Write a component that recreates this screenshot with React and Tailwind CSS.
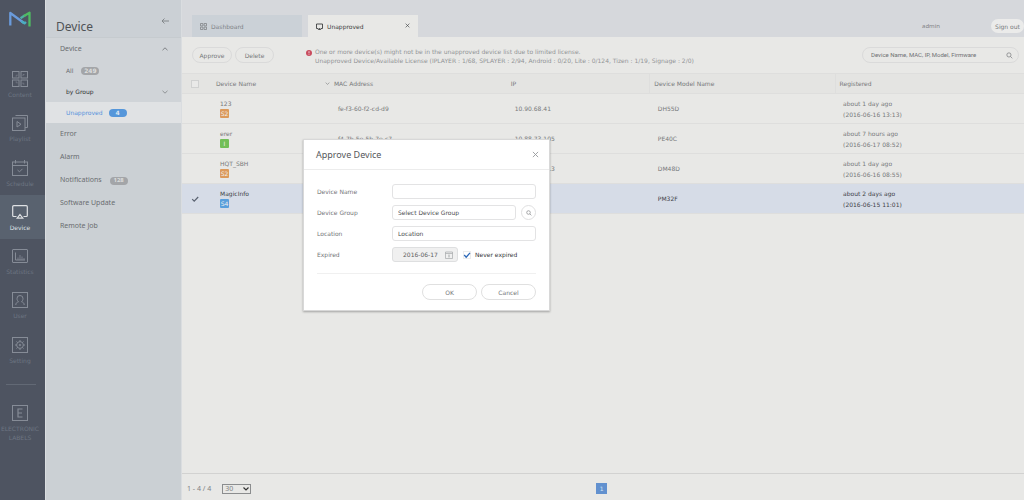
import React, { useState } from "react";

const stroke = { fill: "none", stroke: "currentColor", strokeWidth: 1 };

function ContentIcon() {
  return (
    <svg viewBox="0 0 16 16" className="size-4" {...stroke}>
      <rect x="0.5" y="0.5" width="6.5" height="6.5" />
      <rect x="9" y="0.5" width="6.5" height="6.5" />
      <rect x="0.5" y="9" width="6.5" height="6.5" />
      <rect x="9" y="9" width="6.5" height="6.5" />
      <path d="M3.500 5h1.500V3.500M11 5V3.500h1.500M3.500 11h1.500v1.500M12.500 13H11v-1.500" strokeWidth="0.6" />
    </svg>
  );
}

function PlaylistIcon() {
  return (
    <svg viewBox="0 0 16 16" className="size-4" {...stroke}>
      <path d="M3.500 0.500h12v12h-2.500" />
      <rect x="0.5" y="3" width="12.5" height="12.5" />
      <path d="M5 6.500v5.500l4-2.750z" />
    </svg>
  );
}

function ScheduleIcon() {
  return (
    <svg viewBox="0 0 16 16" className="size-4" {...stroke}>
      <rect x="0.5" y="2" width="15" height="13.500" />
      <path d="M0.500 5.500h15M3.500 0v3.500M12.500 0v3.500M5.500 10l2 1.800 3-3" />
    </svg>
  );
}

function DeviceIcon() {
  return (
    <svg viewBox="0 0 16 16" className="size-4" {...stroke} strokeWidth="1.200">
      <path d="M4.500 12.500H1.700a1 1 0 0 1-1-1V2.700a1 1 0 0 1 1-1h12.600a1 1 0 0 1 1 1V11.500a1 1 0 0 1-1 1h-2.800" />
      <path d="M8 10.500l2.800 3.700H5.200z" />
    </svg>
  );
}

function StatisticsIcon() {
  return (
    <svg viewBox="0 0 16 16" className="size-4" {...stroke}>
      <rect x="0.5" y="1.500" width="15" height="13" rx="0.500" />
      <path d="M3.500 4.500V12h9.500" />
      <path d="M6 12V9.500M8 12V7M10 12V8.500M12 12v-2" strokeWidth="0.800" />
    </svg>
  );
}

function UserIcon() {
  return (
    <svg viewBox="0 0 16 16" className="size-4" {...stroke}>
      <rect x="0.5" y="0.5" width="15" height="15" />
      <path d="M3.800 13c0-2 1-2.700 2.700-3.200-.8-.8-1.500-1.800-1.500-3.100A3 3 0 0 1 8 3.500a3 3 0 0 1 3 3.200c0 1.300-.7 2.300-1.500 3.100 1.700.5 2.700 1.200 2.700 3.200" />
    </svg>
  );
}

function SettingIcon() {
  return (
    <svg viewBox="0 0 16 16" className="size-4" {...stroke}>
      <rect x="0.5" y="0.5" width="15" height="15" />
      <circle cx="8" cy="8" r="3.400" />
      <circle cx="8" cy="8" r="0.800" />
      <path d="M8 3v1.500M8 11.500V13M3 8h1.500M11.500 8H13M4.500 4.500l1 1M10.500 10.500l1 1M11.500 4.500l-1 1M5.500 10.500l-1 1" />
    </svg>
  );
}

function Magnifier({ className }) {
  return (
    <svg viewBox="0 0 10 10" className={className} {...stroke}>
      <circle cx="4.200" cy="4.200" r="3" />
      <path d="M6.500 6.500L9 9" />
    </svg>
  );
}

function Chevron({ up, className }) {
  return (
    <svg viewBox="0 0 6 4" className={className} fill="none" stroke="currentColor" strokeWidth="0.800">
      <path d={up ? "M0.500 3.200L3 0.800l2.500 2.400" : "M0.500 0.800L3 3.200l2.500-2.400"} />
    </svg>
  );
}

function Cross({ className }) {
  return (
    <svg viewBox="0 0 8 8" className={className} fill="none" stroke="currentColor" strokeWidth="1">
      <path d="M1 1l6 6M7 1L1 7" />
    </svg>
  );
}

const NAV = [
  ["Content", ContentIcon],
  ["Playlist", PlaylistIcon],
  ["Schedule", ScheduleIcon],
  ["Device", DeviceIcon],
  ["Statistics", StatisticsIcon],
  ["User", UserIcon],
  ["Setting", SettingIcon],
];

const BADGES = {
  S2: "bg-[#dc9a5c]",
  I: "bg-[#72bf58]",
  S4: "bg-[#5a9fdc]",
};

const DEVICES = [
  { name: "123", badge: "S2", mac: "fe-f3-60-f2-cd-d9", ip: "10.90.68.41", model: "DH55D", ago: "about 1 day ago", date: "(2016-06-16 13:13)" },
  { name: "erer", badge: "I", mac: "f4-7b-5e-5b-7e-c7", ip: "10.88.73.105", model: "PE40C", ago: "about 7 hours ago", date: "(2016-06-17 08:52)" },
  { name: "HQT_SBH", badge: "S2", mac: "fc-f1-36-a2-0d-18", ip: "10.90.68.213", model: "DM48D", ago: "about 1 day ago", date: "(2016-06-16 08:55)" },
  { name: "MagicInfo", badge: "S4", mac: "fc-f1-36-a0-4c-27", ip: "10.90.68.7", model: "PM32F", ago: "about 2 days ago", date: "(2016-06-15 11:01)", selected: true },
];

function MainNav() {
  return (
    <nav aria-label="Main" className="flex w-[45px] shrink-0 flex-col items-center bg-[#4e5461] text-[#6d7481]">
      <a href="#home" aria-label="Home" className="flex h-[62px] w-full justify-center pt-[11px] pr-[5px]">
        <svg viewBox="0 0 22 16" className="h-4 w-[22px]" fill="none" strokeWidth="2.300" strokeLinejoin="round">
          <path d="M1.300 14.500V2L15 12" stroke="#6a9bdc" />
          <path d="M12.500 10.200L15.500 12.300L17 11" stroke="#4aaec0" />
          <path d="M11.500 7.300L16 4.200" stroke="#4fb0a4" />
          <path d="M15 5L20.500 1.700V15.500" stroke="#4fbb62" />
        </svg>
      </a>
      <ul className="grid h-[310px] w-full grid-rows-7">
        {NAV.map(([label, Icon]) => (
          <li key={label}>
            <a
              href={"#" + label.toLowerCase()}
              className={
                "flex h-full flex-col items-center gap-[3px] pt-[9px] pr-[5px] text-[6px] leading-[9px] " +
                (label === "Device" ? "bg-[#59626f] text-[#dfe1e4]" : "")
              }
            >
              <span className={label === "Device" ? "" : "text-[#868c97]"}><Icon /></span>
              {label}
            </a>
          </li>
        ))}
      </ul>
      <hr className="mt-3 mr-1 w-[30px] border-t border-[#626975]" />
      <a href="#labels" className="mt-5 flex flex-col items-center gap-[3px] pr-[5px] text-center text-[6px] leading-[9px]">
        <svg viewBox="0 0 16 16" className="size-4 text-[#868c97]" {...stroke}>
          <rect x="0.5" y="0.5" width="15" height="15" />
          <path d="M10.500 4H6v8h4.500M6 8h4" strokeWidth="1.200" />
        </svg>
        <span>ELECTRONIC<br />LABELS</span>
      </a>
    </nav>
  );
}

function Count({ children, active }) {
  return (
    <span className={"flex h-2 w-[18px] items-center justify-center rounded-full text-[6px] font-bold " + (active ? "bg-[#5596da] text-[#dbe7f3]" : "bg-[#a3a5a8] text-[#dcdddd]")}>
      {children}
    </span>
  );
}

function SidePanel() {
  return (
    <aside className="w-[137px] shrink-0 border-r border-l border-[#dadde0] bg-[#cbd0d4] text-[7px] font-['Noto_Sans',sans-serif] text-[#6a6d70]">
      <header className="flex h-[38px] items-center justify-between border-b border-[#c6cbcf] bg-[#cbd0d5] pr-3 pl-[10px] pt-4">
        <h1 className="text-[12px] leading-4 text-[#505356]">Device</h1>
        <button type="button" aria-label="Collapse panel" className="pb-3 text-[#7d8184]">
          <svg viewBox="0 0 8 6" className="h-[6px] w-2" fill="none" stroke="currentColor" strokeWidth="0.900">
            <path d="M8 3H1M3.500 0.500L1 3l2.500 2.500" />
          </svg>
        </button>
      </header>
      <ul className="bg-[#d0d4d8]">
        <li>
          <a href="#device" className="flex h-[22px] items-center justify-between pr-[13px] pl-[14px]">
            Device <Chevron up className="h-1 w-[6px]" />
          </a>
        </li>
        <li>
          <a href="#all" className="flex h-[21px] items-center gap-2 pl-[20px] font-['DejaVu_Sans',sans-serif] text-[6px]">All <Count>249</Count></a>
        </li>
        <li>
          <a href="#group" className="flex h-[21px] items-center justify-between pr-[13px] pl-[20px] font-['DejaVu_Sans',sans-serif] text-[6px] text-[#2f3133]">
            by Group <Chevron className="h-1 w-[6px] text-[#7d8184]" />
          </a>
        </li>
        <li>
          <a href="#unapproved" className="flex h-[21px] items-center gap-[6px] bg-[#e0e2e4] pl-[20px] font-['DejaVu_Sans',sans-serif] text-[6px] text-[#5793dc]">
            Unapproved <Count active>4</Count>
          </a>
        </li>
      </ul>
      <ul className="grid h-[115px] grid-rows-5">
        {["Error", "Alarm", "Notifications", "Software Update", "Remote Job"].map((t) => (
          <li key={t}>
            <a href={"#" + t.replace(" ", "-").toLowerCase()} className="flex h-full items-center gap-2 pl-[14px]">
              {t}
              {t === "Notifications" && <Count>128</Count>}
            </a>
          </li>
        ))}
      </ul>
    </aside>
  );
}

function TopBar() {
  return (
    <header className="flex h-[37px] items-end bg-[#d6d8dc] pl-[10px] text-[6px]">
      <div role="tablist" className="flex gap-[6px]">
        <button type="button" role="tab" aria-selected="false" className="flex h-[22px] w-[110px] items-center gap-1 bg-[#cbd1d7] pl-2 text-[#808387]">
          <svg viewBox="0 0 7 7" className="size-[7px]" fill="none" stroke="currentColor" strokeWidth="0.800">
            <path d="M0.500 0.500h2.400v2.400H0.500zM4.100 0.500h2.400v2.400H4.100zM0.500 4.100h2.400v2.400H0.500zM4.100 4.100h2.400v2.400H4.100z" />
          </svg>
          Dashboard
        </button>
        <div className="flex h-[22px] w-[110px] items-center justify-between bg-[#e8e8e6] pr-2 pl-2 text-[#3c3e40]">
          <button type="button" role="tab" aria-selected="true" className="flex items-center gap-1">
            <svg viewBox="0 0 7 7" className="size-[7px]" fill="none" stroke="currentColor" strokeWidth="0.900">
              <path d="M2 5.500H0.500v-4.500h6v4.500H5M2.300 6.500L3.500 5l1.200 1.500z" />
            </svg>
            Unapproved
          </button>
          <button type="button" aria-label="Close tab" className="pb-[2px]"><Cross className="size-[5px]" /></button>
        </div>
      </div>
      <div className="mb-1 ml-auto flex items-center gap-[51px] text-[#7f8285]">
        <span className="font-['Noto_Sans',sans-serif] text-[6px] leading-[10px]">admin</span>
        <button type="button" className="flex h-[14px] w-[33px] items-center justify-center rounded-full bg-[#ebebea] text-[6px] whitespace-nowrap text-[#77797b]">Sign out</button>
      </div>
    </header>
  );
}

function Pill({ children, className }) {
  return (
    <button type="button" className={"h-4 rounded-full border border-[#dadada] text-[6px] " + className}>
      {children}
    </button>
  );
}

function Toolbar() {
  return (
    <div className="flex h-[36px] items-start px-[10px] pt-[10px]">
      <div className="flex gap-[3px]">
        <Pill className="w-10">Approve</Pill>
        <Pill className="w-[39px]">Delete</Pill>
      </div>
      <div className="ml-[32px] flex gap-[3px] text-[6px] leading-[9px] text-[#929496]">
        <svg viewBox="0 0 6 6" className="mt-[3px] size-[6px]">
          <circle cx="3" cy="3" r="3" fill="#c94b5e" />
          <path d="M3 1.200v2.200M3 4.200v0.700" stroke="#ecd9dc" strokeWidth="0.900" />
        </svg>
        <p>
          One or more device(s) might not be in the unapproved device list due to limited license.
          <br />
          Unapproved Device/Available License (IPLAYER : 1/68, SPLAYER : 2/94, Android : 0/20, Lite : 0/124, Tizen : 1/19, Signage : 2/0)
        </p>
      </div>
      <form className="mr-[-5px] ml-auto flex h-4 w-[157px] items-center rounded-full border border-[#dadada] pr-[5px] pl-2" onSubmit={(e) => e.preventDefault()}>
        <input
          type="text"
          aria-label="Search devices"
          placeholder="Device Name, MAC, IP, Model, Firmware"
          className="min-w-0 flex-1 bg-transparent font-['Roboto',sans-serif] text-[6px] leading-[10px] outline-none placeholder:text-[#6f7173]"
        />
        <button type="submit" aria-label="Search"><Magnifier className="size-[7px]" /></button>
      </form>
    </div>
  );
}

function DeviceTable() {
  const [picked, setPicked] = useState(() => DEVICES.map((d) => !!d.selected));
  return (
    <table className="w-full table-fixed border-collapse text-left text-[6px] text-[#77797b]">
      <colgroup>
        <col className="w-[30px]" />
        <col className="w-[14%]" />
        <col className="w-[21%]" />
        <col className="w-[17%]" />
        <col className="w-[22%]" />
        <col />
      </colgroup>
      <thead className="bg-[#e4e4e2]">
        <tr className="h-5 border-y border-[#dededd]">
          <th className="p-0 pl-[9px]">
            <input type="checkbox" aria-label="Select all" className="block size-2 appearance-none border border-[#d0d1d1] bg-[#e9e9e8]" />
          </th>
          <th className="p-0 pl-1 font-normal">
            <span className="flex items-center justify-between">Device Name <Chevron className="h-[3px] w-[5px]" /></span>
          </th>
          <th className="p-0 pl-1 font-normal">MAC Address</th>
          <th className="p-0 pl-1 font-normal">IP</th>
          <th className="border-l border-[#dededd] p-0 pl-1 font-normal">Device Model Name</th>
          <th className="border-l border-[#dededd] p-0 pl-1 font-normal">Registered</th>
        </tr>
      </thead>
      <tbody>
        {DEVICES.map((d, i) => (
          <tr key={d.name} className={"h-[30px] border-b border-[#dededd] " + (d.selected ? "bg-[#d6dce7] text-[#3f4247]" : "")}>
            <td className="p-0 pl-[9px]">
              <label className="relative block size-2">
                <input
                  type="checkbox"
                  aria-label={"Select " + d.name}
                  checked={picked[i]}
                  onChange={() => setPicked(picked.map((p, k) => (k === i ? !p : p)))}
                  className="block size-2 appearance-none"
                />
                {picked[i] && (
                  <svg viewBox="0 0 8 8" className="absolute inset-0 size-2" fill="none" stroke="#5a6270" strokeWidth="1.200">
                    <path d="M1.200 4.200l2 2 4-4.200" />
                  </svg>
                )}
              </label>
            </td>
            <td className="p-0 pl-2 leading-[10px]">
              {d.name}
              <span className={"flex size-[9px] items-center justify-center rounded-[1px] text-[6px] text-[#f0f0ee] " + BADGES[d.badge]}>{d.badge}</span>
            </td>
            <td className="p-0 pl-2">{d.mac}</td>
            <td className="p-0 pl-2">{d.ip}</td>
            <td className="p-0 pl-2">{d.model}</td>
            <td className="p-0 pl-2 leading-[11px]">{d.ago}<br />{d.date}</td>
          </tr>
        ))}
      </tbody>
    </table>
  );
}

function Footer() {
  return (
    <footer className="mt-auto flex h-[27px] items-center border-t border-[#d2d2d1] pt-1 pl-[5px]">
      <div className="flex items-center gap-[11px] font-['Noto_Sans',sans-serif] text-[7px] text-[#808284]">
        <span>1 - 4 / 4</span>
        <span className="relative flex">
          <select aria-label="Rows per page" className="h-[10px] w-[29px] appearance-none border border-[#8b8d8e] pl-[2px] text-[7px] leading-[8px]">
            <option>30</option>
          </select>
          <svg viewBox="0 0 6 4" className="pointer-events-none absolute top-[3px] right-[2px] h-1 w-[6px]" fill="none" stroke="#333" strokeWidth="1.200">
            <path d="M0.500 0.500L3 3l2.500-2.500" />
          </svg>
        </span>
      </div>
      <button type="button" aria-current="page" className="mr-auto mb-[2px] ml-[345px] size-[11px] bg-[#6291cf] text-[6px] leading-[11px] text-[#d5e4f5]">1</button>
    </footer>
  );
}

const FIELD = "h-[15px] rounded-[3px] border border-[#e3e3e4] px-[5px] text-[6px] text-[#4b4d4f] outline-none placeholder:text-[#4b4d4f]";

function ApproveDialog() {
  return (
    <section role="dialog" aria-labelledby="dlg-title" className="absolute top-[139px] left-[303px] w-[247px] border border-[#d8d8d8] bg-white text-[6px] text-[#737578] shadow-[0_1px_2px_rgba(0,0,0,0.3)]">
      <header className="flex h-[30px] items-center justify-between border-b border-[#ececec] pr-[10px] pl-3">
        <h2 id="dlg-title" className="font-['Noto_Sans',sans-serif] text-[9px] leading-3 text-[#55585b]">Approve Device</h2>
        <button type="button" aria-label="Close" className="text-[#95979a]"><Cross className="size-[7px]" /></button>
      </header>
      <form onSubmit={(e) => e.preventDefault()} className="px-[13px] pt-[14px] pb-[10px]">
        <div className="grid grid-cols-[75px_1fr] items-center gap-y-[6px]">
          <label htmlFor="f-name">Device Name</label>
          <input id="f-name" type="text" className={FIELD} />
          <label htmlFor="f-group">Device Group</label>
          <div className="flex items-center gap-[5px]">
            <input id="f-group" type="text" placeholder="Select Device Group" className={"min-w-0 flex-1 " + FIELD} />
            <button type="button" aria-label="Find group" className="flex size-[15px] items-center justify-center rounded-full border border-[#e0e0e1]">
              <Magnifier className="size-[6px]" />
            </button>
          </div>
          <label htmlFor="f-loc">Location</label>
          <input id="f-loc" type="text" placeholder="Location" className={FIELD} />
          <label htmlFor="f-exp">Expired</label>
          <div className="flex items-center gap-[5px]">
            <span className="flex h-[15px] w-[66px] items-center rounded-[3px] border border-[#dedfe0] bg-[#f0f0f0] pr-1 pl-[10px]">
              <input id="f-exp" type="text" defaultValue="2016-06-17" disabled className="min-w-0 flex-1 text-[6px] text-[#5c5e60]" />
              <svg viewBox="0 0 8 8" className="size-2 text-[#a5a7a9]" fill="none" stroke="currentColor" strokeWidth="0.700">
                <path d="M0.500 1h7v6.500h-7zM0.500 2.500h7M3 4.200h2M3 5.800h2" />
              </svg>
            </span>
            <label className="relative flex items-center gap-1 text-[#333537]">
              <input type="checkbox" defaultChecked className="peer size-2 appearance-none border border-[#ececec]" />
              <svg viewBox="0 0 8 8" className="pointer-events-none invisible absolute left-0 size-2 peer-checked:visible" fill="none" stroke="#2c68b8" strokeWidth="1.300">
                <path d="M1.200 4l2 2.200 3.800-4.400" />
              </svg>
              Never expired
            </label>
          </div>
        </div>
        <div className="mt-[11px] flex justify-end gap-1 border-t border-[#f0f0f0] pt-[10px]">
          <button type="submit" className="h-4 w-[55px] rounded-full border border-[#e0e0e0]">OK</button>
          <button type="button" className="h-4 w-[55px] rounded-full border border-[#e0e0e0]">Cancel</button>
        </div>
      </form>
    </section>
  );
}

export default function App() {
  return (
    <div className="relative flex min-h-screen bg-[#e8e8e6] font-['DejaVu_Sans',sans-serif] text-[#77797b]">
      <MainNav />
      <SidePanel />
      <main className="flex min-w-0 flex-1 flex-col">
        <TopBar />
        <Toolbar />
        <DeviceTable />
        <Footer />
      </main>
      <ApproveDialog />
    </div>
  );
}
